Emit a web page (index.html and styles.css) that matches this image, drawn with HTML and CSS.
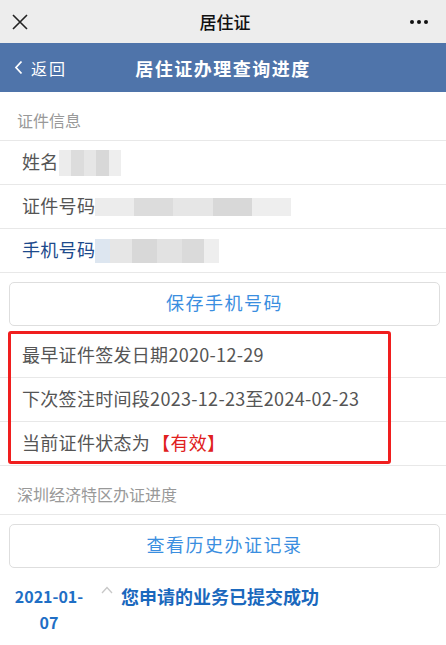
FILE: index.html
```html
<!DOCTYPE html>
<html lang="zh-CN">
<head>
  <meta charset="UTF-8" />
  <meta name="viewport" content="width=device-width, initial-scale=1.0"/>
  <title>居住证</title>
  <link rel="stylesheet" href="styles.css">
</head>
<body>
  <div class="wx-bar">
    <svg class="wx-close" width="16" height="16" viewBox="0 0 16 16">
      <path d="M1 1 L15 15 M15 1 L1 15" stroke="#222" stroke-width="1.6" fill="none"/>
    </svg>
    <div class="wx-title">居住证</div>
    <div class="wx-more"><i></i><i></i><i></i></div>
  </div>

  <div class="header">
    <div class="back">
      <svg width="9" height="15" viewBox="0 0 9 15">
        <path d="M7.5 1.5 L2 7.5 L7.5 13.5" stroke="#fff" stroke-width="1.8" fill="none"/>
      </svg>
      <span>返回</span>
    </div>
    <div class="header-title">居住证办理查询进度</div>
  </div>

  <div class="section-label">证件信息</div>
  <div class="row">姓名<span class="mosaic m-name"></span></div>
  <div class="row">证件号码<span class="mosaic m-id"></span></div>
  <div class="row row-blue">手机号码<span class="mosaic m-phone"></span></div>

  <div class="btn-wrap">
    <button class="plain-btn">保存手机号码</button>
  </div>

  <div class="status">
    <div class="row">最早证件签发日期2020-12-29</div>
    <div class="row">下次签注时间段2023-12-23至2024-02-23</div>
    <div class="row">当前证件状态为<span class="valid">【有效】</span></div>
    <div class="mark"></div>
  </div>

  <div class="section-label">深圳经济特区办证进度</div>
  <div class="btn-wrap">
    <button class="plain-btn">查看历史办证记录</button>
  </div>

  <div class="timeline">
    <div class="tl-date">2021-01-<wbr>07</div>
    <svg class="tl-caret" width="12" height="8" viewBox="0 0 12 8">
      <path d="M1 7 L6 1.5 L11 7" stroke="#c8c8c8" stroke-width="1.3" fill="none"/>
    </svg>
    <div class="tl-text">您申请的业务已提交成功</div>
  </div>
</body>
</html>
```

FILE: styles.css
```css
body {
  margin: 0;
  font-family: "Noto Sans CJK SC", "Noto Sans", sans-serif;
  background: #fff;
  color: #333;
  width: 446px;
  overflow: hidden;
}

.wx-bar {
  height: 43px;
  background: #ededed;
  display: flex;
  align-items: center;
  justify-content: space-between;
  padding: 0 18px 0 12px;
}

.wx-close {
  width: 16px;
  height: 16px;
}

.wx-title {
  font-size: 17px;
  color: #111;
  font-weight: 500;
  margin-left: 12px;
}

.wx-more {
  display: flex;
  gap: 3px;
}

.wx-more i {
  width: 4px;
  height: 4px;
  border-radius: 50%;
  background: #111;
}

.header {
  height: 49px;
  background: #4f74aa;
  display: flex;
  align-items: center;
  color: #fff;
  position: relative;
}

.back {
  display: flex;
  align-items: center;
  gap: 8px;
  padding-left: 14px;
  font-size: 16px;
  letter-spacing: 2px;
}

.header-title {
  position: absolute;
  left: 0;
  right: 0;
  text-align: center;
  font-size: 18px;
  font-weight: bold;
  letter-spacing: 1.5px;
  pointer-events: none;
}

.section-label {
  height: 30px;
  padding-top: 18px;
  line-height: 20px;
  padding-left: 17px;
  font-size: 16px;
  color: #999;
  border-bottom: 1px solid #e8e8e8;
}

.row {
  height: 39px;
  padding: 0 0 4px 22px;
  font-size: 18px;
  letter-spacing: 0.3px;
  color: #555;
  border-bottom: 1px solid #e8e8e8;
  display: flex;
  align-items: center;
}

.row-blue {
  color: #1c4a8c;
}

.mosaic {
  height: 22px;
  display: inline-block;
  margin-top: 4px;
  background:
    linear-gradient(90deg, #ececec 0 20%, #dcdcdc 20% 40%, #e6e6e6 40% 60%, #d8d8d8 60% 80%, #eeeeee 80%);
}

.m-name {
  width: 62px;
  height: 26px;
}

.m-id {
  width: 196px;
  height: 18px;
}

.m-phone {
  width: 124px;
  height: 24px;
  background:
    linear-gradient(90deg, #dde6f0 0 12%, #e6e6e6 12% 30%, #d8d8d8 30% 50%, #e2e2e2 50% 70%, #dadada 70% 88%, #eeeeee 88%);
}

.btn-wrap {
  padding: 9px 6px 8px 9px;
}

.plain-btn {
  width: 100%;
  height: 44px;
  padding: 0 0 4px;
  background: #fff;
  border: 1px solid #dedede;
  border-radius: 5px;
  font-family: inherit;
  font-size: 18px;
  letter-spacing: 1.5px;
  color: #3a8ee0;
}

.status {
  position: relative;
}

.valid {
  color: #e02020;
  margin-left: 2px;
}

.mark {
  position: absolute;
  left: 8px;
  top: -3px;
  width: 377px;
  height: 127px;
  border: 3px solid #f01e1e;
  border-radius: 3px;
  pointer-events: none;
}

.timeline {
  display: flex;
  align-items: flex-start;
  padding-top: 7px;
}

.tl-date {
  width: 84px;
  margin-left: 7px;
  text-align: center;
  font-size: 16px;
  font-weight: bold;
  color: #1f6fc5;
  line-height: 26px;
}

.tl-caret {
  margin-left: 10px;
  margin-top: 3px;
}

.tl-text {
  margin-left: 8px;
  font-size: 18px;
  font-weight: bold;
  color: #1a68bd;
  line-height: 26px;
}
```
